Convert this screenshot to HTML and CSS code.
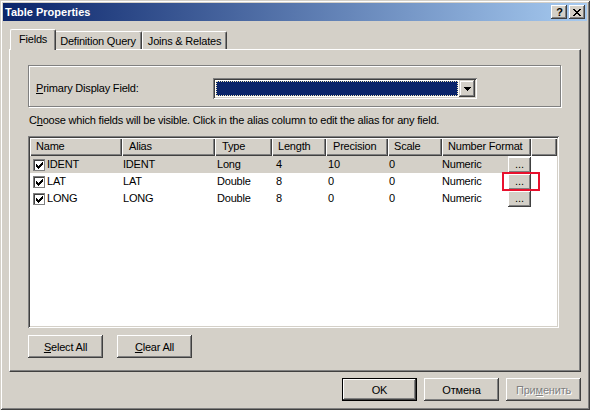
FILE: index.html
```html
<!DOCTYPE html>
<html>
<head>
<meta charset="utf-8">
<title>Table Properties</title>
<link rel="stylesheet" href="styles.css">
</head>
<body>
<div class="window">
  <div class="titlebar">
    <span class="title">Table Properties</span>
    <div class="caption-btns">
      <span class="cbtn help">?</span>
      <span class="cbtn close"><svg width="8" height="7" viewBox="0 0 8 7"><path d="M0 0h2v1H0z M6 0h2v1H6z M1 1h2v1H1z M5 1h2v1H5z M2 2h4v1H2z M3 3h2v1H3z M2 4h4v1H2z M1 5h2v1H1z M5 5h2v1H5z M0 6h2v1H0z M6 6h2v1H6z" fill="#000"/></svg></span>
    </div>
  </div>
  <div class="client">
    <div class="tabs">
      <div class="tab active">Fields</div>
      <div class="tab">Definition Query</div>
      <div class="tab">Joins &amp; Relates</div>
    </div>
    <div class="panel">
      <div class="group">
        <span class="group-label"><u>P</u>rimary Display Field:</span>
        <div class="combo">
          <div class="combo-field"><div class="combo-sel"></div></div>
          <div class="combo-btn"><svg width="7" height="4" viewBox="0 0 7 4"><path d="M0 0h7v1H0z M1 1h5v1H1z M2 2h3v1H2z M3 3h1v1H3z" fill="#000"/></svg></div>
        </div>
      </div>
      <div class="hint">C<u>h</u>oose which fields will be visible. Click in the alias column to edit the alias for any field.</div>
      <div class="listview">
        <div class="lv-header">
          <div class="hcell c-name">Name</div>
          <div class="hcell c-alias">Alias</div>
          <div class="hcell c-type">Type</div>
          <div class="hcell c-len">Length</div>
          <div class="hcell c-prec">Precision</div>
          <div class="hcell c-scale">Scale</div>
          <div class="hcell c-fmt">Number Format</div>
          <div class="hcell c-rest"></div>
        </div>
        <div class="lv-row selected">
          <div class="cell c-name"><span class="chk"><svg width="7" height="7" viewBox="0 0 7 7"><path d="M6 0h1v1H6z M5 1h2v1H5z M0 2h1v1H0z M4 2h3v1H4z M0 3h2v1H0z M3 3h3v1H3z M0 4h5v1H0z M1 5h3v1H1z M2 6h1v1H2z" fill="#000"/></svg></span>IDENT</div>
          <div class="cell c-alias">IDENT</div>
          <div class="cell c-type">Long</div>
          <div class="cell c-len">4</div>
          <div class="cell c-prec">10</div>
          <div class="cell c-scale">0</div>
          <div class="cell c-fmt"><span class="fmt-text">Numeric</span><span class="dots">...</span></div>
          <div class="cell c-rest"></div>
        </div>
        <div class="lv-row">
          <div class="cell c-name"><span class="chk"><svg width="7" height="7" viewBox="0 0 7 7"><path d="M6 0h1v1H6z M5 1h2v1H5z M0 2h1v1H0z M4 2h3v1H4z M0 3h2v1H0z M3 3h3v1H3z M0 4h5v1H0z M1 5h3v1H1z M2 6h1v1H2z" fill="#000"/></svg></span>LAT</div>
          <div class="cell c-alias">LAT</div>
          <div class="cell c-type">Double</div>
          <div class="cell c-len">8</div>
          <div class="cell c-prec">0</div>
          <div class="cell c-scale">0</div>
          <div class="cell c-fmt"><span class="fmt-text">Numeric</span><span class="dots">...</span></div>
          <div class="cell c-rest"></div>
        </div>
        <div class="lv-row">
          <div class="cell c-name"><span class="chk"><svg width="7" height="7" viewBox="0 0 7 7"><path d="M6 0h1v1H6z M5 1h2v1H5z M0 2h1v1H0z M4 2h3v1H4z M0 3h2v1H0z M3 3h3v1H3z M0 4h5v1H0z M1 5h3v1H1z M2 6h1v1H2z" fill="#000"/></svg></span>LONG</div>
          <div class="cell c-alias">LONG</div>
          <div class="cell c-type">Double</div>
          <div class="cell c-len">8</div>
          <div class="cell c-prec">0</div>
          <div class="cell c-scale">0</div>
          <div class="cell c-fmt"><span class="fmt-text">Numeric</span><span class="dots">...</span></div>
          <div class="cell c-rest"></div>
        </div>
        <div class="highlight"></div>
      </div>
      <div class="panel-btns">
        <span class="btn"><u>S</u>elect All</span>
        <span class="btn"><u>C</u>lear All</span>
      </div>
    </div>
    <div class="footer">
      <span class="btn default">OK</span>
      <span class="btn">Отмена</span>
      <span class="btn disabled">При<u>м</u>енить</span>
    </div>
  </div>
</div>
</body>
</html>
```

FILE: styles.css
```css
* { box-sizing: border-box; }
html, body { margin: 0; padding: 0; }
body {
  width: 590px;
  height: 410px;
  overflow: hidden;
  background: #d4d0c8;
  font-family: "Liberation Sans", Arial, sans-serif;
  font-size: 11px;
  letter-spacing: -0.2px;
  color: #000;
}
u { text-decoration: underline; text-underline-offset: 1px; }

.window {
  width: 590px;
  height: 410px;
  padding: 3px;
  background: #d4d0c8;
  box-shadow: inset 1px 1px #d4d0c8, inset -1px -1px #404040, inset 2px 2px #fff, inset -2px -2px #808080;
  display: flex;
  flex-direction: column;
}

.titlebar {
  height: 18px;
  flex: none;
  display: flex;
  align-items: center;
  padding: 0 2px;
  background: linear-gradient(to right, #0a246a 0%, #a6caf0 100%);
}
.title { color: #fff; font-weight: bold; font-size: 11px; letter-spacing: 0; }
.caption-btns { margin-left: auto; display: flex; gap: 2px; }
.cbtn {
  width: 16px;
  height: 14px;
  background: #d4d0c8;
  box-shadow: inset -1px -1px #404040, inset 1px 1px #fff, inset -2px -2px #808080;
  display: flex;
  align-items: center;
  justify-content: center;
}
.cbtn.help { font-weight: bold; font-size: 11px; line-height: 14px; padding-left: 1px; letter-spacing: 0; }
.cbtn.close svg { display: block; }

.client {
  flex: 1;
  display: flex;
  flex-direction: column;
  padding: 6px 6px 0 6px;
}

.tabs {
  height: 22px;
  flex: none;
  display: flex;
  align-items: flex-end;
  padding-left: 3px;
}
.tab {
  height: 18px;
  padding: 0 5px 0 5px;
  display: flex;
  align-items: center;
  border-top: 1px solid #fff;
  border-left: 1px solid #fff;
  border-right: 1px solid #404040;
  box-shadow: inset -1px 0 #808080;
  border-top-left-radius: 2px;
  border-top-right-radius: 2px;
  white-space: nowrap;
}
.tab.active {
  height: 21px;
  margin: 0 -2px -1px -2px;
  padding: 0 8px 2px 8px;
  background: #d4d0c8;
  position: relative;
  z-index: 1;
}

.panel {
  height: 323px;
  flex: none;
  border-top: 1px solid #fff;
  border-left: 1px solid #fff;
  border-right: 1px solid #404040;
  border-bottom: 1px solid #404040;
  box-shadow: inset -1px -1px #808080;
  padding: 15px 0 0 18px;
  display: flex;
  flex-direction: column;
}

.group {
  width: 533px;
  height: 42px;
  border: 1px solid #808080;
  box-shadow: inset 1px 1px #fff, 1px 1px #fff;
  display: flex;
  align-items: flex-start;
  padding: 12px 0 0 7px;
}
.group-label { width: 177px; line-height: 21px; }
.combo {
  width: 264px;
  height: 21px;
  display: flex;
  padding: 2px;
  background: #fff;
  box-shadow: inset 1px 1px #808080, inset -1px -1px #fff, inset 2px 2px #404040, inset -2px -2px #d4d0c8;
}
.combo-field { flex: 1; padding: 1px; }
.combo-sel {
  height: 100%;
  background: #0a246a;
  border: 1px dotted #efe6b8;
}
.combo-btn {
  width: 16px;
  height: 17px;
  background: #d4d0c8;
  box-shadow: inset -1px -1px #404040, inset 1px 1px #d4d0c8, inset -2px -2px #808080, inset 2px 2px #fff;
  display: flex;
  align-items: center;
  justify-content: center;
}
.combo-btn svg { display: block; }

.hint { margin: 7px 0 0 1px; line-height: 13px; white-space: nowrap; }

.listview {
  position: relative;
  margin-top: 9px;
  width: 531px;
  height: 192px;
  padding: 2px;
  background: #fff;
  box-shadow: inset 1px 1px #808080, inset -1px -1px #fff, inset 2px 2px #404040, inset -2px -2px #d4d0c8;
}
.lv-header { display: flex; height: 18px; }
.hcell {
  height: 18px;
  line-height: 16px;
  padding-left: 6px;
  background: #d4d0c8;
  box-shadow: inset 1px 1px #fff, inset -1px -1px #404040, inset -2px -2px #808080;
  white-space: nowrap;
  overflow: hidden;
}
.c-name { width: 92px; }
.c-alias { width: 93px; }
.c-type { width: 57px; }
.c-len { width: 54px; }
.c-prec { width: 62px; }
.c-scale { width: 54px; }
.c-fmt { width: 89px; }
.c-rest { flex: 1; }
.hcell.c-alias, .hcell.c-type, .hcell.c-prec { padding-left: 7px; }

.lv-row { display: flex; height: 17px; }
.cell {
  height: 17px;
  line-height: 17px;
  padding-left: 2px;
  white-space: nowrap;
  display: flex;
  align-items: center;
}
.cell.c-name { padding-left: 3px; }
.cell.c-alias { padding-left: 1px; }
.cell.c-len { padding-left: 4px; }
.cell.c-scale { padding-left: 1px; }
.cell.c-fmt { padding-left: 0; }
.selected .cell:not(.c-rest) { background: #d4d0c8; }
.selected .cell.c-fmt { background: linear-gradient(to right, #d4d0c8 66px, #fff 66px); }

.chk {
  width: 12px;
  height: 12px;
  margin-right: 2px;
  background: #fff;
  border: 1px solid #808080;
  box-shadow: inset 1px 1px #404040;
  display: flex;
  align-items: center;
  justify-content: center;
  padding: 1px 0 0 1px;
}
.chk svg { display: block; }

.fmt-text { flex: 1; }
.dots {
  width: 23px;
  height: 16px;
  margin-top: 1px;
  align-self: flex-start;
  background: #d4d0c8;
  box-shadow: inset -1px -1px #404040, inset 1px 1px #fff, inset -2px -2px #808080;
  display: flex;
  align-items: center;
  justify-content: center;
  line-height: 10px;
  padding-bottom: 3px;
  letter-spacing: 0;
}

.highlight {
  position: absolute;
  left: 474px;
  top: 36px;
  width: 38px;
  height: 19px;
  border: 2px solid #e8112d;
}

.panel-btns { display: flex; gap: 14px; margin-top: 7px; }

.btn {
  width: 75px;
  height: 23px;
  background: #d4d0c8;
  box-shadow: inset -1px -1px #404040, inset 1px 1px #fff, inset -2px -2px #808080;
  display: flex;
  align-items: center;
  justify-content: center;
  white-space: nowrap;
}
.btn.default {
  border: 1px solid #000;
}
.btn.disabled { color: #808080; text-shadow: 1px 1px #fff; }

.footer {
  display: flex;
  justify-content: flex-end;
  gap: 7px;
  margin-top: 6px;
}
```
